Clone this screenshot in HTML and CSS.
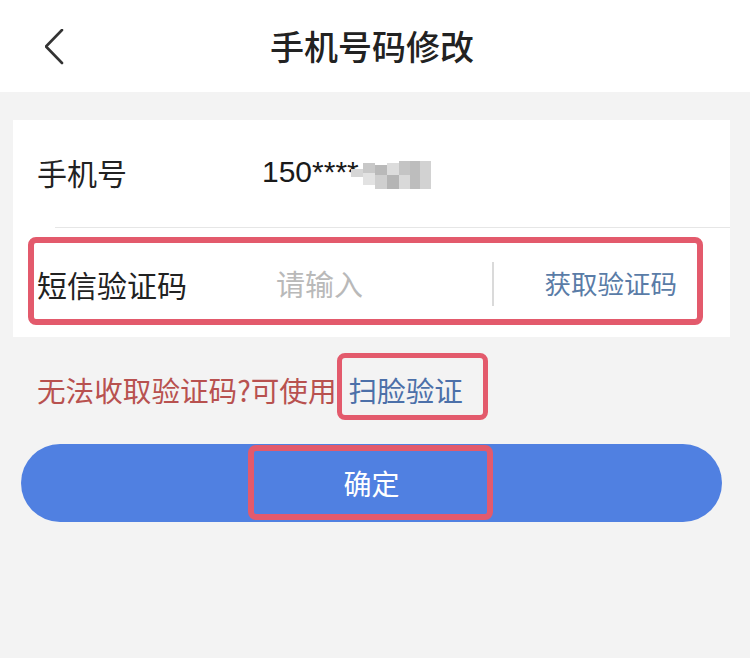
FILE: index.html
```html
<!DOCTYPE html>
<html lang="zh-CN">
<head>
<meta charset="utf-8">
<title>手机号码修改</title>
<link rel="stylesheet" href="styles.css">
</head>
<body>
<header class="header">
  <div class="back">
    <svg width="20" height="36" viewBox="0 0 20 36"><polyline points="17,1 1,17.5 17,34" fill="none" stroke="#333" stroke-width="2.6" stroke-linecap="round" stroke-linejoin="round"/></svg>
  </div>
  <h1 class="title">手机号码修改</h1>
  <div></div>
</header>
<main class="main">
  <section class="card">
    <div class="row row-phone">
      <span class="label label-phone">手机号</span>
      <span class="value">150****<svg class="mosaic" width="80" height="30" viewBox="0 0 80 30">
        <rect x="0" y="8" width="12" height="8" fill="#d6d6d6"/>
        <rect x="12" y="2" width="12" height="10" fill="#c8c8c8"/>
        <rect x="12" y="12" width="12" height="12" fill="#e2e2e2"/>
        <rect x="24" y="4" width="12" height="10" fill="#b9b9b9"/>
        <rect x="24" y="14" width="12" height="14" fill="#cfcfcf"/>
        <rect x="36" y="2" width="12" height="12" fill="#dcdcdc"/>
        <rect x="36" y="14" width="12" height="14" fill="#b5b5b5"/>
        <rect x="48" y="0" width="11" height="14" fill="#c4c4c4"/>
        <rect x="48" y="14" width="11" height="14" fill="#d9d9d9"/>
        <rect x="59" y="0" width="10" height="28" fill="#bdbdbd"/>
        <rect x="69" y="0" width="11" height="28" fill="#d2d2d2"/>
      </svg></span>
    </div>
    <div class="sep"></div>
    <div class="row row-code">
      <span class="label label-code">短信验证码</span>
      <span class="placeholder">请输入</span>
      <span class="vline"></span>
      <span class="get-code">获取验证码</span>
      <span class="mark mark-row"></span>
    </div>
  </section>
  <p class="tip">无法收取验证码?可使用<span class="face">扫脸验证<span class="mark mark-face"></span></span></p>
  <button class="confirm">确定<span class="mark mark-btn"></span></button>
</main>
</body>
</html>
```

FILE: styles.css
```css
* { box-sizing: border-box; }
html, body { margin: 0; padding: 0; }
body {
  width: 750px;
  height: 658px;
  background: #f3f3f3;
  font-family: "Noto Sans CJK SC", "Noto Sans", sans-serif;
  color: #222;
  overflow: hidden;
}
.header {
  height: 92px;
  background: #fff;
  display: grid;
  grid-template-columns: 1fr auto 1fr;
  align-items: center;
}
.back {
  padding-left: 45px;
  display: flex;
  align-items: center;
  padding-top: 2px;
}
.title {
  margin: 0;
  font-size: 34px;
  font-weight: 500;
  color: #222;
  line-height: 1;
  padding-right: 6px;
}
.main {
  padding-top: 28px;
}
.card {
  background: #fff;
  margin: 0 20px 0 13px;
}
.row {
  display: flex;
  align-items: center;
  position: relative;
}
.row-phone {
  height: 107px;
  padding-left: 24px;
  padding-bottom: 4px;
}
.label {
  font-size: 30px;
  color: #222;
  line-height: 1;
}
.label-phone { width: 225px; }
.value {
  font-family: "Liberation Sans", Arial, sans-serif;
  font-size: 30px;
  color: #1a1a1a;
  display: flex;
  align-items: center;
  line-height: 1;
}
.mosaic {
  margin-left: -8px;
  margin-top: 8px;
  filter: blur(0.6px);
}
.sep {
  height: 1px;
  background: #e6e6e6;
  margin-left: 42px;
}
.row-code {
  height: 109px;
  padding-left: 24px;
  padding-right: 53px;
  padding-top: 2px;
}
.label-code { width: 239px; }
.placeholder {
  font-size: 29px;
  color: #b9b9b9;
  line-height: 1;
  flex: 1;
}
.vline {
  width: 2px;
  height: 44px;
  background: #dadada;
  margin-right: 51px;
}
.get-code {
  font-size: 26.5px;
  color: #5a7ca7;
  line-height: 1;
}
.mark {
  position: absolute;
  border: 6px solid #e35a6c;
  border-radius: 8px;
  pointer-events: none;
}
.mark-row {
  left: 15px;
  top: 9px;
  right: 27px;
  bottom: 12px;
}
.tip {
  margin: 33px 0 0 37px;
  height: 40px;
  font-size: 28.6px;
  line-height: 40px;
  color: #b8514f;
  display: flex;
  align-items: center;
}
.face {
  position: relative;
  color: #4c70a9;
  font-size: 28.6px;
  margin-left: 12px;
}
.mark-face {
  left: -12px;
  top: -17px;
  width: 151px;
  height: 67px;
  border-width: 5px;
}
.confirm {
  position: relative;
  display: flex;
  align-items: center;
  justify-content: center;
  width: 701px;
  height: 78px;
  margin: 34px 0 0 21px;
  border: none;
  border-radius: 39px;
  background: #5080e1;
  color: #fff;
  font-family: "Noto Sans CJK SC", "Noto Sans", sans-serif;
  font-size: 28px;
  padding: 0;
}
.mark-btn {
  left: 227px;
  top: 1px;
  width: 245px;
  height: 75px;
}
```
